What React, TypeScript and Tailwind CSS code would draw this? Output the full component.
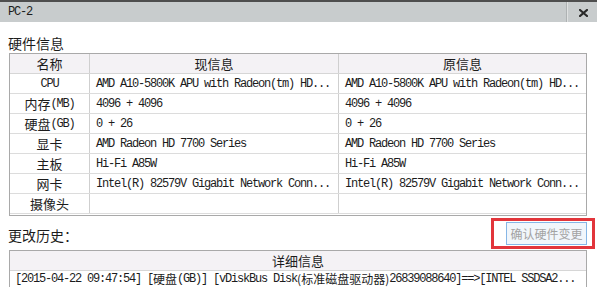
import React from "react";

const mono = "font-['Liberation_Mono','Noto_Sans_CJK_SC',monospace] text-[12px] tracking-[-1.2px] text-[#1c1c1c]";
const cjk = "font-['Noto_Sans_CJK_SC','Microsoft_YaHei',sans-serif] tracking-normal";

type Row = { label: React.ReactNode; cur: string; orig: string };

const rows: Row[] = [
  { label: <span className={mono}>CPU</span>, cur: "AMD A10-5800K APU with Radeon(tm) HD...", orig: "AMD A10-5800K APU with Radeon(tm) HD..." },
  {
    label: (
      <span className="flex items-center">
        <span className={`${cjk} text-[13px] text-[#1c1c1c]`}>内存</span>
        <span className={mono}>(MB)</span>
      </span>
    ),
    cur: "4096 + 4096",
    orig: "4096 + 4096",
  },
  {
    label: (
      <span className="flex items-center">
        <span className={`${cjk} text-[13px] text-[#1c1c1c]`}>硬盘</span>
        <span className={mono}>(GB)</span>
      </span>
    ),
    cur: "0 + 26",
    orig: "0 + 26",
  },
  { label: <span className={`${cjk} text-[13px] text-[#1c1c1c]`}>显卡</span>, cur: "AMD Radeon HD 7700 Series", orig: "AMD Radeon HD 7700 Series" },
  { label: <span className={`${cjk} text-[13px] text-[#1c1c1c]`}>主板</span>, cur: "Hi-Fi A85W", orig: "Hi-Fi A85W" },
  { label: <span className={`${cjk} text-[13px] text-[#1c1c1c]`}>网卡</span>, cur: "Intel(R) 82579V Gigabit Network Conn...", orig: "Intel(R) 82579V Gigabit Network Conn..." },
  { label: <span className={`${cjk} text-[13px] text-[#1c1c1c]`}>摄像头</span>, cur: "", orig: "" },
];

export default function App() {
  return (
    <div className="w-[597px] h-[287px] bg-white overflow-hidden flex flex-col">
      {/* title bar */}
      <div className="h-[22px] shrink-0 border-t-[2px] border-[#4e4e4e] bg-[#c8cccd] flex items-stretch">
        <div className={`${mono} flex-1 flex items-center pl-[8px]`}>PC-2</div>
        <div className="w-[31px] flex items-center justify-center border-l border-[#aeb2b3] shadow-[inset_1px_0_0_#dfe1e1]">
          <svg width="9" height="8" viewBox="0 0 9 8" className="mt-[1px] ml-[2px]">
            <path d="M1 1 L8 7 M8 1 L1 7" stroke="#2a2a2a" strokeWidth="2.2" strokeLinecap="square" />
          </svg>
        </div>
      </div>

      <div className="pl-[9px] pr-[10px] flex flex-col">
        {/* section title */}
        <div className="h-[31px] flex items-end pb-[3px]">
          <span className={`${cjk} text-[14px] text-[#1c1c1c] leading-none -ml-[1px]`}>硬件信息</span>
        </div>

        {/* hardware table */}
        <div className="border border-[#a9a9a9] pb-[1px]">
          <div className="flex h-[20px] bg-[#f4f2f5] border-b border-[#d6d6d6]">
            <div className={`w-[80px] border-r border-[#cfcfcf] flex items-center justify-center ${cjk} text-[13px] text-[#1c1c1c]`}>名称</div>
            <div className={`w-[249px] border-r border-[#cfcfcf] flex items-center justify-center ${cjk} text-[13px] text-[#1c1c1c]`}>现信息</div>
            <div className={`flex-1 flex items-center justify-center ${cjk} text-[13px] text-[#1c1c1c]`}>原信息</div>
          </div>
          {rows.map((r, i) => (
            <div key={i} className="flex h-[20px] border-b border-[#dcdcdc]">
              <div className="w-[80px] border-r border-[#cfcfcf] flex items-center justify-center">{r.label}</div>
              <div className={`w-[249px] border-r border-[#cfcfcf] flex items-center pl-[6px] whitespace-pre ${mono}`}>{r.cur}</div>
              <div className={`flex-1 flex items-center pl-[6px] whitespace-pre ${mono}`}>{r.orig}</div>
            </div>
          ))}
        </div>

        {/* history label + button */}
        <div className="h-[34px] flex items-start justify-between">
          <span className={`${cjk} text-[14px] text-[#1c1c1c] leading-none mt-[12px] -ml-[1px]`}>更改历史：</span>
          <div className="mt-[2px] -mr-[8px] w-[104px] h-[31px] border-[3px] border-[#e2353b] flex items-center justify-end pr-[5px]">
            <div className={`h-[23px] w-[81px] border border-[#86b6e6] bg-[#f1f6fb] flex items-center justify-center ${cjk} text-[12px] text-[#a3a3a3]`}>
              确认硬件变更
            </div>
          </div>
        </div>

        {/* history table */}
        <div className="border border-[#a9a9a9] border-b-0">
          <div className={`h-[20px] bg-[#f4f2f5] border-b border-[#d6d6d6] flex items-center justify-center ${cjk} text-[13px] text-[#1c1c1c]`}>详细信息</div>
          <div className={`h-[16px] leading-[16px] flex items-center pl-[5px] whitespace-pre ${mono}`}>
            [2015-04-22 09:47:54] [<span className={`${cjk} text-[12px] leading-[16px]`}>硬盘</span>(GB)] [vDiskBus Disk<span className={`${cjk} text-[12px] leading-[16px]`}>(标准磁盘驱动器)</span>26839088640]==&gt;[INTEL SSDSA2...
          </div>
        </div>
      </div>
    </div>
  );
}
